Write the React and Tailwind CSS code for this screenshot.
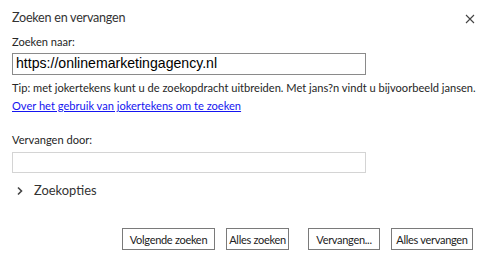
import React from 'react';

const Btn = ({ w, children }) => (
  <button className={`${w} h-[22px] border border-[#7a7a7a] bg-white text-[11px] tracking-[-0.3px] text-[#222] leading-none`}>
    {children}
  </button>
);

export default function App() {
  return (
    <div className="w-[493px] h-[262px] bg-white text-[#262626] font-['Lato',sans-serif] overflow-hidden">
      <div className="flex items-center justify-between pl-[12px] pr-[18px] pt-[9px] h-[28px]">
        <h1 className="text-[12.6px] tracking-[-0.25px] text-[#333]">Zoeken en vervangen</h1>
        <svg width="10" height="10" viewBox="0 0 10 10" className="mt-[1px]">
          <path d="M1 1L9 9M9 1L1 9" stroke="#444" strokeWidth="1.1" />
        </svg>
      </div>
      <div className="px-[12px]">
        <div className="mt-[7px] text-[11.1px] leading-[14px]">Zoeken naar:</div>
        <div className="mt-[4px] w-[354px] h-[22px] border border-[#8a8a8a] flex items-center px-[3px] font-['Liberation_Sans',sans-serif] text-[14.1px] text-black">
          https://onlinemarketingagency.nl
        </div>
        <div className="mt-[6px] text-[11.1px] leading-[14px] whitespace-nowrap">
          Tip: met jokertekens kunt u de zoekopdracht uitbreiden. Met jans?n vindt u bijvoorbeeld jansen.
        </div>
        <a href="#" className="block mt-[4px] text-[11.1px] leading-[14px] text-[#1515f0] underline">
          Over het gebruik van jokertekens om te zoeken
        </a>
        <div className="mt-[20px] text-[11.1px] leading-[14px]">Vervangen door:</div>
        <div className="mt-[5px] w-[354px] h-[21px] border border-[#d4d4d4]"></div>
        <div className="mt-[8px] flex items-center gap-[10px] pl-[4px]">
          <svg width="8" height="10" viewBox="0 0 8 10">
            <path d="M2 1.5L5.5 5L2 8.5" stroke="#444" strokeWidth="1.6" fill="none" />
          </svg>
          <span className="text-[12.9px] text-[#333]">Zoekopties</span>
        </div>
      </div>
      <div className="flex justify-end pr-[20px] mt-[28px]">
        <Btn w="w-[93px]">Volgende zoeken</Btn>
        <div className="w-[11px]" />
        <Btn w="w-[63px]">Alles zoeken</Btn>
        <div className="w-[19px]" />
        <Btn w="w-[72px]">Vervangen...</Btn>
        <div className="w-[11px]" />
        <Btn w="w-[82px]">Alles vervangen</Btn>
      </div>
    </div>
  );
}
